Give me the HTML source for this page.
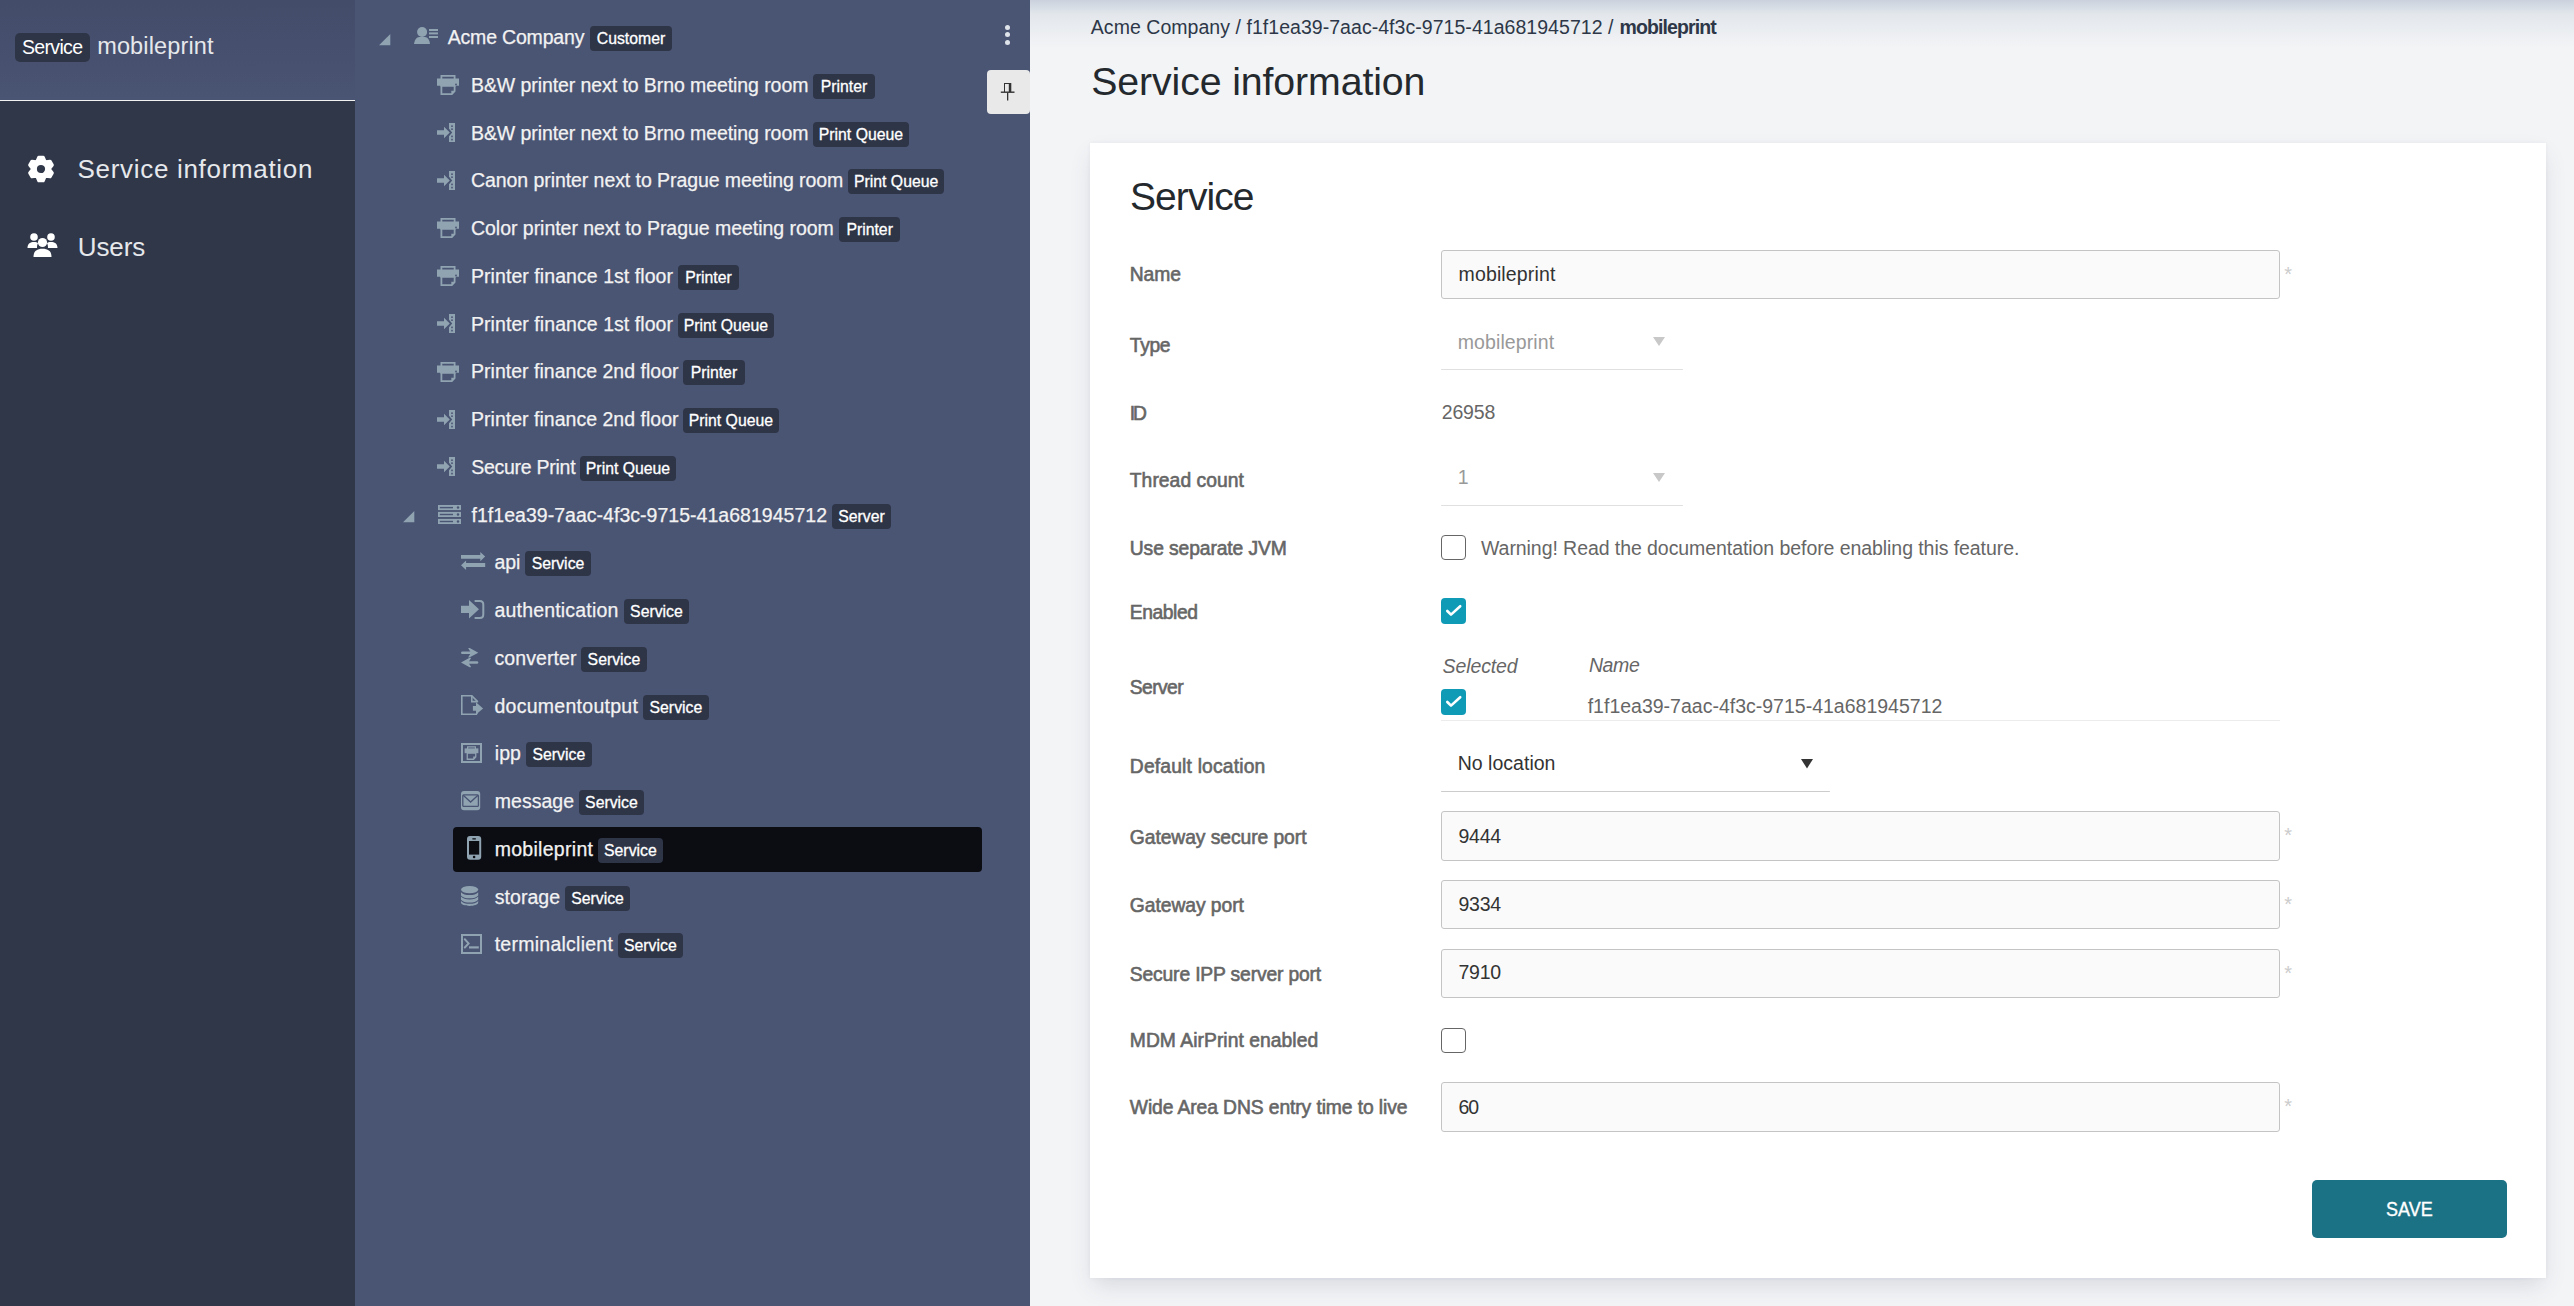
<!DOCTYPE html>
<html><head><meta charset="utf-8"><title>Service information</title>
<style>
html,body{margin:0;padding:0;width:2574px;height:1306px;overflow:hidden;background:#f3f4f6;}
body{position:relative;font-family:"Liberation Sans",sans-serif;}
.t{position:absolute;line-height:1;white-space:pre;}
</style></head><body>
<div style="position:absolute;left:0px;top:0px;width:355px;height:100px;background:linear-gradient(180deg,#434c69 0%,#4a5473 100%);"></div>
<div style="position:absolute;left:0px;top:100px;width:355px;height:1px;background:#f2f2f2;"></div>
<div style="position:absolute;left:0px;top:101px;width:355px;height:1205px;background:#2f3749;"></div>
<div style="position:absolute;left:15px;top:33px;width:75px;height:29px;background:#2e3547;border-radius:5px;"></div>
<div class="t" style="left:22.00px;top:38px;font-size:19.5px;color:#ffffff;letter-spacing:-0.667px;">Service</div>
<div class="t" style="left:97.20px;top:35px;font-size:23.5px;color:#e6e8ec;letter-spacing:0.140px;">mobileprint</div>
<svg style="position:absolute;left:26.6px;top:154.6px" width="28" height="28" viewBox="0 0 28 28"><path fill="#ffffff" stroke="#ffffff" stroke-width="2.8" stroke-linejoin="round" fill-rule="evenodd" d="M9.96 6.07 L11.69 2.12 L16.31 2.12 L18.04 6.07 L18.85 6.54 L23.13 6.06 L25.44 10.06 L22.89 13.53 L22.89 14.47 L25.44 17.94 L23.13 21.94 L18.85 21.46 L18.04 21.93 L16.31 25.88 L11.69 25.88 L9.96 21.93 L9.15 21.46 L4.87 21.94 L2.56 17.94 L5.11 14.47 L5.11 13.53 L2.56 10.06 L4.87 6.06 L9.15 6.54 Z M19.5 14.0 A5.5 5.5 0 1 0 8.5 14.0 A5.5 5.5 0 1 0 19.5 14.0 Z"/></svg>
<svg style="position:absolute;left:27px;top:233px" width="31" height="25" viewBox="0 0 31 25"><g fill="#ffffff"><circle cx="7" cy="4" r="3.8"/><circle cx="24" cy="4" r="3.8"/><path d="M0.5 15 C0.5 10.5 3.5 9 7 9 C9 9 10.3 9.6 11 10.2 C10.2 11.5 10 12.5 10 15 Z"/><path d="M30.5 15 C30.5 10.5 27.5 9 24 9 C22 9 20.7 9.6 20 10.2 C20.8 11.5 21 12.5 21 15 Z"/><circle cx="15.5" cy="9.5" r="4.6"/><path d="M6.5 24 C6.5 18 10 15.8 15.5 15.8 C21 15.8 24.5 18 24.5 24 Z"/></g></svg>
<div class="t" style="left:77.60px;top:156px;font-size:26px;color:#e6e8ec;letter-spacing:0.683px;">Service information</div>
<div class="t" style="left:77.80px;top:234px;font-size:26px;color:#e6e8ec;letter-spacing:-0.100px;">Users</div>
<div style="position:absolute;left:355px;top:0px;width:675px;height:1306px;background:#4a5473;"></div>
<div style="position:absolute;left:453px;top:827px;width:529px;height:45px;background:#0b0d12;border-radius:4px;"></div>
<div class="t" style="left:447.70px;top:28px;font-size:19.5px;color:#f2f2f2;letter-spacing:-0.182px;-webkit-text-stroke:0.25px #f2f2f2;">Acme Company</div>
<div style="position:absolute;left:590px;top:26.000000000000004px;width:82px;height:25px;background:#2e3547;border-radius:4px;"></div>
<div class="t" style="left:590.00px;top:31px;font-size:15.8px;color:#ffffff;-webkit-text-stroke:0.3px #ffffff;width:82.0px;text-align:center;">Customer</div>
<div class="t" style="left:471.00px;top:76px;font-size:19.5px;color:#f2f2f2;letter-spacing:-0.081px;-webkit-text-stroke:0.25px #f2f2f2;">B&amp;W printer next to Brno meeting room</div>
<div style="position:absolute;left:813.1px;top:73.75px;width:61.799999999999955px;height:25px;background:#2e3547;border-radius:4px;"></div>
<div class="t" style="left:813.10px;top:79px;font-size:15.8px;color:#ffffff;-webkit-text-stroke:0.3px #ffffff;width:61.8px;text-align:center;">Printer</div>
<div class="t" style="left:471.00px;top:124px;font-size:19.5px;color:#f2f2f2;letter-spacing:-0.081px;-webkit-text-stroke:0.25px #f2f2f2;">B&amp;W printer next to Brno meeting room</div>
<div style="position:absolute;left:813.1px;top:121.49999999999999px;width:95.69999999999993px;height:25px;background:#2e3547;border-radius:4px;"></div>
<div class="t" style="left:813.10px;top:127px;font-size:15.8px;color:#ffffff;-webkit-text-stroke:0.3px #ffffff;width:95.7px;text-align:center;">Print Queue</div>
<div class="t" style="left:471.00px;top:171px;font-size:19.5px;color:#f2f2f2;letter-spacing:-0.068px;-webkit-text-stroke:0.25px #f2f2f2;">Canon printer next to Prague meeting room</div>
<div style="position:absolute;left:848.3px;top:169.25px;width:95.70000000000005px;height:25px;background:#2e3547;border-radius:4px;"></div>
<div class="t" style="left:848.30px;top:174px;font-size:15.8px;color:#ffffff;-webkit-text-stroke:0.3px #ffffff;width:95.7px;text-align:center;">Print Queue</div>
<div class="t" style="left:471.00px;top:219px;font-size:19.5px;color:#f2f2f2;letter-spacing:-0.033px;-webkit-text-stroke:0.25px #f2f2f2;">Color printer next to Prague meeting room</div>
<div style="position:absolute;left:839.3px;top:217.0px;width:60.700000000000045px;height:25px;background:#2e3547;border-radius:4px;"></div>
<div class="t" style="left:839.30px;top:222px;font-size:15.8px;color:#ffffff;-webkit-text-stroke:0.3px #ffffff;width:60.7px;text-align:center;">Printer</div>
<div class="t" style="left:471.00px;top:267px;font-size:19.5px;color:#f2f2f2;letter-spacing:0.062px;-webkit-text-stroke:0.25px #f2f2f2;">Printer finance 1st floor</div>
<div style="position:absolute;left:678.2px;top:264.75px;width:60.59999999999991px;height:25px;background:#2e3547;border-radius:4px;"></div>
<div class="t" style="left:678.20px;top:270px;font-size:15.8px;color:#ffffff;-webkit-text-stroke:0.3px #ffffff;width:60.6px;text-align:center;">Printer</div>
<div class="t" style="left:471.00px;top:315px;font-size:19.5px;color:#f2f2f2;letter-spacing:0.062px;-webkit-text-stroke:0.25px #f2f2f2;">Printer finance 1st floor</div>
<div style="position:absolute;left:678.2px;top:312.5px;width:95.5px;height:25px;background:#2e3547;border-radius:4px;"></div>
<div class="t" style="left:678.20px;top:318px;font-size:15.8px;color:#ffffff;-webkit-text-stroke:0.3px #ffffff;width:95.5px;text-align:center;">Print Queue</div>
<div class="t" style="left:471.00px;top:362px;font-size:19.5px;color:#f2f2f2;letter-spacing:0.021px;-webkit-text-stroke:0.25px #f2f2f2;">Printer finance 2nd floor</div>
<div style="position:absolute;left:683.1px;top:360.25px;width:61.60000000000002px;height:25px;background:#2e3547;border-radius:4px;"></div>
<div class="t" style="left:683.10px;top:365px;font-size:15.8px;color:#ffffff;-webkit-text-stroke:0.3px #ffffff;width:61.6px;text-align:center;">Printer</div>
<div class="t" style="left:471.00px;top:410px;font-size:19.5px;color:#f2f2f2;letter-spacing:0.021px;-webkit-text-stroke:0.25px #f2f2f2;">Printer finance 2nd floor</div>
<div style="position:absolute;left:683.1px;top:408.0px;width:95.60000000000002px;height:25px;background:#2e3547;border-radius:4px;"></div>
<div class="t" style="left:683.10px;top:413px;font-size:15.8px;color:#ffffff;-webkit-text-stroke:0.3px #ffffff;width:95.6px;text-align:center;">Print Queue</div>
<div class="t" style="left:471.20px;top:458px;font-size:19.5px;color:#f2f2f2;letter-spacing:-0.264px;-webkit-text-stroke:0.25px #f2f2f2;">Secure Print</div>
<div style="position:absolute;left:580.2px;top:455.75px;width:95.59999999999991px;height:25px;background:#2e3547;border-radius:4px;"></div>
<div class="t" style="left:580.20px;top:461px;font-size:15.8px;color:#ffffff;-webkit-text-stroke:0.3px #ffffff;width:95.6px;text-align:center;">Print Queue</div>
<div class="t" style="left:471.50px;top:506px;font-size:19.5px;color:#f2f2f2;letter-spacing:0.029px;-webkit-text-stroke:0.25px #f2f2f2;">f1f1ea39-7aac-4f3c-9715-41a681945712</div>
<div style="position:absolute;left:832.1px;top:503.50000000000006px;width:58.799999999999955px;height:25px;background:#2e3547;border-radius:4px;"></div>
<div class="t" style="left:832.10px;top:509px;font-size:15.8px;color:#ffffff;-webkit-text-stroke:0.3px #ffffff;width:58.8px;text-align:center;">Server</div>
<div class="t" style="left:494.50px;top:553px;font-size:19.5px;color:#f2f2f2;letter-spacing:-0.100px;-webkit-text-stroke:0.25px #f2f2f2;">api</div>
<div style="position:absolute;left:525.3px;top:551.25px;width:65.40000000000009px;height:25px;background:#2e3547;border-radius:4px;"></div>
<div class="t" style="left:525.30px;top:556px;font-size:15.8px;color:#ffffff;-webkit-text-stroke:0.3px #ffffff;width:65.4px;text-align:center;">Service</div>
<div class="t" style="left:494.50px;top:601px;font-size:19.5px;color:#f2f2f2;letter-spacing:0.185px;-webkit-text-stroke:0.25px #f2f2f2;">authentication</div>
<div style="position:absolute;left:624.1px;top:599.0px;width:64.69999999999993px;height:25px;background:#2e3547;border-radius:4px;"></div>
<div class="t" style="left:624.10px;top:604px;font-size:15.8px;color:#ffffff;-webkit-text-stroke:0.3px #ffffff;width:64.7px;text-align:center;">Service</div>
<div class="t" style="left:494.50px;top:649px;font-size:19.5px;color:#f2f2f2;letter-spacing:0.075px;-webkit-text-stroke:0.25px #f2f2f2;">converter</div>
<div style="position:absolute;left:581.3px;top:646.75px;width:65.30000000000007px;height:25px;background:#2e3547;border-radius:4px;"></div>
<div class="t" style="left:581.30px;top:652px;font-size:15.8px;color:#ffffff;-webkit-text-stroke:0.3px #ffffff;width:65.3px;text-align:center;">Service</div>
<div class="t" style="left:494.50px;top:697px;font-size:19.5px;color:#f2f2f2;letter-spacing:0.269px;-webkit-text-stroke:0.25px #f2f2f2;">documentoutput</div>
<div style="position:absolute;left:643.1px;top:694.5px;width:65.60000000000002px;height:25px;background:#2e3547;border-radius:4px;"></div>
<div class="t" style="left:643.10px;top:700px;font-size:15.8px;color:#ffffff;-webkit-text-stroke:0.3px #ffffff;width:65.6px;text-align:center;">Service</div>
<div class="t" style="left:494.80px;top:744px;font-size:19.5px;color:#f2f2f2;letter-spacing:0.050px;-webkit-text-stroke:0.25px #f2f2f2;">ipp</div>
<div style="position:absolute;left:526.2px;top:742.25px;width:65.39999999999998px;height:25px;background:#2e3547;border-radius:4px;"></div>
<div class="t" style="left:526.20px;top:747px;font-size:15.8px;color:#ffffff;-webkit-text-stroke:0.3px #ffffff;width:65.4px;text-align:center;">Service</div>
<div class="t" style="left:494.70px;top:792px;font-size:19.5px;color:#f2f2f2;letter-spacing:0.050px;-webkit-text-stroke:0.25px #f2f2f2;">message</div>
<div style="position:absolute;left:579px;top:790.0px;width:64.89999999999998px;height:25px;background:#2e3547;border-radius:4px;"></div>
<div class="t" style="left:579.00px;top:795px;font-size:15.8px;color:#ffffff;-webkit-text-stroke:0.3px #ffffff;width:64.9px;text-align:center;">Service</div>
<div class="t" style="left:494.70px;top:840px;font-size:19.5px;color:#f2f2f2;letter-spacing:0.290px;-webkit-text-stroke:0.25px #f2f2f2;">mobileprint</div>
<div style="position:absolute;left:598px;top:837.75px;width:64.79999999999995px;height:25px;background:#2e3547;border-radius:4px;"></div>
<div class="t" style="left:598.00px;top:843px;font-size:15.8px;color:#ffffff;-webkit-text-stroke:0.3px #ffffff;width:64.8px;text-align:center;">Service</div>
<div class="t" style="left:494.70px;top:888px;font-size:19.5px;color:#f2f2f2;letter-spacing:0.067px;-webkit-text-stroke:0.25px #f2f2f2;">storage</div>
<div style="position:absolute;left:565.2px;top:885.5px;width:64.69999999999993px;height:25px;background:#2e3547;border-radius:4px;"></div>
<div class="t" style="left:565.20px;top:891px;font-size:15.8px;color:#ffffff;-webkit-text-stroke:0.3px #ffffff;width:64.7px;text-align:center;">Service</div>
<div class="t" style="left:494.70px;top:935px;font-size:19.5px;color:#f2f2f2;letter-spacing:0.254px;-webkit-text-stroke:0.25px #f2f2f2;">terminalclient</div>
<div style="position:absolute;left:618px;top:933.25px;width:64.70000000000005px;height:25px;background:#2e3547;border-radius:4px;"></div>
<div class="t" style="left:618.00px;top:938px;font-size:15.8px;color:#ffffff;-webkit-text-stroke:0.3px #ffffff;width:64.7px;text-align:center;">Service</div>
<svg style="position:absolute;left:378.6px;top:33.7px;overflow:visible" width="12" height="12" viewBox="0 0 12 12"><path fill="#8fa3b1" d="M0 11.3 L11.3 11.3 L11.3 0 Z"/></svg>
<svg style="position:absolute;left:402.6px;top:510.8px;overflow:visible" width="12" height="12" viewBox="0 0 12 12"><path fill="#8fa3b1" d="M0 11.3 L11.3 11.3 L11.3 0 Z"/></svg>
<svg style="position:absolute;left:414px;top:27px;overflow:visible" width="25" height="18" viewBox="0 0 25 18"><g fill="#8fa3b1"><circle cx="8.1" cy="5" r="5"/><path d="M0 17 C0.6 12.5 2.8 10.2 5.2 10 L11 10 C13.4 10.2 15.5 12.5 16 17 Z"/><rect x="15" y="2" width="9" height="2"/><rect x="15" y="5.4" width="9" height="2"/><rect x="15" y="9" width="9" height="2"/></g></svg>
<svg style="position:absolute;left:437px;top:75.0px;overflow:visible" width="22" height="20" viewBox="0 0 22 20"><g fill="#8fa3b1"><path fill-rule="evenodd" d="M3.5 0 H18.5 V4 H16.7 V1.7 H5.3 V4 H3.5 Z"/><path d="M0 3.5 H22 V10.8 H18.8 V11.5 H3.2 V10.8 H0 Z"/><path fill-rule="evenodd" d="M3.5 10 H18.5 V16.5 L15.2 20 H3.5 Z M5.3 11.5 V18.3 H14.3 V15.7 H16.7 V11.5 Z"/></g><circle cx="19" cy="9.5" r="0.9" fill="#4a5473"/></svg>
<svg style="position:absolute;left:437px;top:218.25px;overflow:visible" width="22" height="20" viewBox="0 0 22 20"><g fill="#8fa3b1"><path fill-rule="evenodd" d="M3.5 0 H18.5 V4 H16.7 V1.7 H5.3 V4 H3.5 Z"/><path d="M0 3.5 H22 V10.8 H18.8 V11.5 H3.2 V10.8 H0 Z"/><path fill-rule="evenodd" d="M3.5 10 H18.5 V16.5 L15.2 20 H3.5 Z M5.3 11.5 V18.3 H14.3 V15.7 H16.7 V11.5 Z"/></g><circle cx="19" cy="9.5" r="0.9" fill="#4a5473"/></svg>
<svg style="position:absolute;left:437px;top:266.0px;overflow:visible" width="22" height="20" viewBox="0 0 22 20"><g fill="#8fa3b1"><path fill-rule="evenodd" d="M3.5 0 H18.5 V4 H16.7 V1.7 H5.3 V4 H3.5 Z"/><path d="M0 3.5 H22 V10.8 H18.8 V11.5 H3.2 V10.8 H0 Z"/><path fill-rule="evenodd" d="M3.5 10 H18.5 V16.5 L15.2 20 H3.5 Z M5.3 11.5 V18.3 H14.3 V15.7 H16.7 V11.5 Z"/></g><circle cx="19" cy="9.5" r="0.9" fill="#4a5473"/></svg>
<svg style="position:absolute;left:437px;top:361.5px;overflow:visible" width="22" height="20" viewBox="0 0 22 20"><g fill="#8fa3b1"><path fill-rule="evenodd" d="M3.5 0 H18.5 V4 H16.7 V1.7 H5.3 V4 H3.5 Z"/><path d="M0 3.5 H22 V10.8 H18.8 V11.5 H3.2 V10.8 H0 Z"/><path fill-rule="evenodd" d="M3.5 10 H18.5 V16.5 L15.2 20 H3.5 Z M5.3 11.5 V18.3 H14.3 V15.7 H16.7 V11.5 Z"/></g><circle cx="19" cy="9.5" r="0.9" fill="#4a5473"/></svg>
<svg style="position:absolute;left:437px;top:123.0px;overflow:visible" width="19" height="19" viewBox="0 0 19 19"><g fill="#8fa3b1"><path d="M0 7.3 H7 V3.7 L12.8 9.5 L7 15.3 V11.7 H0 Z"/><path d="M12 0 H18 V19 H12 V13.2 L15.2 9.5 L12 5.8 Z"/></g><g fill="#4a5473"><rect x="14.2" y="2.4" width="1.6" height="1.6"/><rect x="14.2" y="5.4" width="1.6" height="1.6"/><rect x="14.2" y="12.6" width="1.6" height="1.6"/><rect x="14.2" y="15.8" width="1.6" height="1.6"/></g></svg>
<svg style="position:absolute;left:437px;top:170.75px;overflow:visible" width="19" height="19" viewBox="0 0 19 19"><g fill="#8fa3b1"><path d="M0 7.3 H7 V3.7 L12.8 9.5 L7 15.3 V11.7 H0 Z"/><path d="M12 0 H18 V19 H12 V13.2 L15.2 9.5 L12 5.8 Z"/></g><g fill="#4a5473"><rect x="14.2" y="2.4" width="1.6" height="1.6"/><rect x="14.2" y="5.4" width="1.6" height="1.6"/><rect x="14.2" y="12.6" width="1.6" height="1.6"/><rect x="14.2" y="15.8" width="1.6" height="1.6"/></g></svg>
<svg style="position:absolute;left:437px;top:314.0px;overflow:visible" width="19" height="19" viewBox="0 0 19 19"><g fill="#8fa3b1"><path d="M0 7.3 H7 V3.7 L12.8 9.5 L7 15.3 V11.7 H0 Z"/><path d="M12 0 H18 V19 H12 V13.2 L15.2 9.5 L12 5.8 Z"/></g><g fill="#4a5473"><rect x="14.2" y="2.4" width="1.6" height="1.6"/><rect x="14.2" y="5.4" width="1.6" height="1.6"/><rect x="14.2" y="12.6" width="1.6" height="1.6"/><rect x="14.2" y="15.8" width="1.6" height="1.6"/></g></svg>
<svg style="position:absolute;left:437px;top:409.5px;overflow:visible" width="19" height="19" viewBox="0 0 19 19"><g fill="#8fa3b1"><path d="M0 7.3 H7 V3.7 L12.8 9.5 L7 15.3 V11.7 H0 Z"/><path d="M12 0 H18 V19 H12 V13.2 L15.2 9.5 L12 5.8 Z"/></g><g fill="#4a5473"><rect x="14.2" y="2.4" width="1.6" height="1.6"/><rect x="14.2" y="5.4" width="1.6" height="1.6"/><rect x="14.2" y="12.6" width="1.6" height="1.6"/><rect x="14.2" y="15.8" width="1.6" height="1.6"/></g></svg>
<svg style="position:absolute;left:437px;top:457.25px;overflow:visible" width="19" height="19" viewBox="0 0 19 19"><g fill="#8fa3b1"><path d="M0 7.3 H7 V3.7 L12.8 9.5 L7 15.3 V11.7 H0 Z"/><path d="M12 0 H18 V19 H12 V13.2 L15.2 9.5 L12 5.8 Z"/></g><g fill="#4a5473"><rect x="14.2" y="2.4" width="1.6" height="1.6"/><rect x="14.2" y="5.4" width="1.6" height="1.6"/><rect x="14.2" y="12.6" width="1.6" height="1.6"/><rect x="14.2" y="15.8" width="1.6" height="1.6"/></g></svg>
<svg style="position:absolute;left:438px;top:505px;overflow:visible" width="23" height="19" viewBox="0 0 23 19"><rect x="0" y="0" width="23" height="5.1" fill="#8fa3b1"/><rect x="1.8" y="1.9" width="13.2" height="1.4" fill="#4a5473"/><circle cx="20" cy="2.55" r="1.2" fill="#4a5473"/><rect x="0" y="6.9" width="23" height="5.1" fill="#8fa3b1"/><rect x="1.8" y="8.8" width="13.2" height="1.4" fill="#4a5473"/><circle cx="20" cy="9.45" r="1.2" fill="#4a5473"/><rect x="0" y="13.9" width="23" height="5.1" fill="#8fa3b1"/><rect x="1.8" y="15.8" width="13.2" height="1.4" fill="#4a5473"/><circle cx="20" cy="16.45" r="1.2" fill="#4a5473"/></svg>
<svg style="position:absolute;left:461px;top:552px;overflow:visible" width="24" height="19" viewBox="0 0 24 19"><g fill="#8fa3b1"><path d="M0 3.1 H19.3 V0 L24.2 4.6 L19.3 9.2 V6.8 H0 Z"/><path d="M24.2 11 H5.1 V8.6 L0 13.3 L5.1 18.1 V15 H24.2 Z"/></g></svg>
<svg style="position:absolute;left:461px;top:600px;overflow:visible" width="24" height="19" viewBox="0 0 24 19"><g fill="#8fa3b1"><path d="M0 5.8 H8 V0 L18 9.2 L8 18.4 V12.9 H0 Z"/></g><path d="M13.6 1 H18.8 C20.9 1 22.3 2.4 22.3 4.5 V14.5 C22.3 16.6 20.9 18 18.8 18 H13.6" fill="none" stroke="#8fa3b1" stroke-width="2"/></svg>
<svg style="position:absolute;left:461px;top:648px;overflow:visible" width="18" height="19" viewBox="0 0 18 19"><g fill="#8fa3b1"><rect x="0" y="3.4" width="12" height="2.6" rx="1.3"/><path d="M7.2 0.2 C8 -0.2 8.6 0 9.2 0.3 L17.3 4.7 L9.2 9.1 C8.6 9.4 8 9.6 7.2 9.2 L10 4.7 Z"/><rect x="5" y="13.2" width="12.3" height="2.6" rx="1.3"/><path d="M10.1 10 C9.3 9.6 8.7 9.8 8.1 10.1 L0 14.5 L8.1 18.9 C8.7 19.2 9.3 19.4 10.1 19 L7.3 14.5 Z"/></g></svg>
<svg style="position:absolute;left:461px;top:695px;overflow:visible" width="23" height="20" viewBox="0 0 23 20"><path d="M16.4 7.3 V6.4 L10.8 0.8 H0.8 V19.2 H15.4 L16.4 17.4" fill="none" stroke="#8fa3b1" stroke-width="1.6"/><path d="M10.8 0.8 V6.6 H16.4" fill="none" stroke="#8fa3b1" stroke-width="1.6"/><path d="M11.9 11.1 H15 V7.3 L22.1 13.4 L15 19.5 V15.7 H11.9 Z" fill="#8fa3b1"/></svg>
<svg style="position:absolute;left:461px;top:743px;overflow:visible" width="21" height="20" viewBox="0 0 21 20"><rect x="1" y="1" width="19" height="18" fill="none" stroke="#8fa3b1" stroke-width="2"/><g fill="#8fa3b1"><path fill-rule="evenodd" d="M6 3.3 H15 V6 H13.8 V4.4 H7.2 V6 H6 Z"/><path d="M3.6 5.4 H17.4 V10.2 H3.6 Z"/><path fill-rule="evenodd" d="M5.6 9.6 H15.4 V14.3 L12.9 16.9 H5.6 Z M6.9 10.7 V15.6 H12.2 V13.6 H14.1 V10.7 Z"/></g></svg>
<svg style="position:absolute;left:461px;top:791px;overflow:visible" width="19" height="19" viewBox="0 0 19 19"><rect x="0" y="0" width="19.2" height="19.2" rx="3" fill="#8fa3b1"/><rect x="1.8" y="3.8" width="15.6" height="11.6" rx="1" fill="none" stroke="#4a5473" stroke-width="1.3"/><path d="M2.2 4.3 L9.6 11 L17 4.3" fill="none" stroke="#4a5473" stroke-width="1.3"/></svg>
<svg style="position:absolute;left:467px;top:836px;overflow:visible" width="14" height="24" viewBox="0 0 14 24"><rect x="0" y="0" width="14.2" height="23.8" rx="3" fill="#8fa3b1"/><rect x="2" y="5" width="10.2" height="13.6" fill="#0b0d12"/><rect x="5.2" y="2.2" width="3.8" height="1.2" rx="0.6" fill="#0b0d12"/><circle cx="7.1" cy="21" r="1.3" fill="#0b0d12"/></svg>
<svg style="position:absolute;left:461px;top:886px;overflow:visible" width="17" height="20" viewBox="0 0 17 20"><g fill="#8fa3b1"><ellipse cx="8.6" cy="3.6" rx="8.6" ry="3.6"/><path d="M0 6.2 C1.5 8.2 5 9 8.6 9 C12.2 9 15.7 8.2 17.2 6.2 V9.4 C15.7 11.4 12.2 12.2 8.6 12.2 C5 12.2 1.5 11.4 0 9.4 Z"/><path d="M0 10.6 C1.5 12.6 5 13.4 8.6 13.4 C12.2 13.4 15.7 12.6 17.2 10.6 V13.8 C15.7 15.8 12.2 16.6 8.6 16.6 C5 16.6 1.5 15.8 0 13.8 Z"/><path d="M0 15 C1.5 17 5 17.8 8.6 17.8 C12.2 17.8 15.7 17 17.2 15 V16.6 C17.2 18.6 13 20 8.6 20 C4.2 20 0 18.6 0 16.6 Z"/></g></svg>
<svg style="position:absolute;left:461px;top:934px;overflow:visible" width="21" height="20" viewBox="0 0 21 20"><rect x="1" y="1" width="19" height="18" fill="none" stroke="#8fa3b1" stroke-width="2"/><path d="M3.8 5.3 L7.6 9.4 L3.8 13.5" fill="none" stroke="#8fa3b1" stroke-width="2" stroke-linecap="round"/><rect x="8" y="12.3" width="9.8" height="2.2" fill="#8fa3b1"/></svg>
<div style="position:absolute;left:1005.1px;top:24.8px;width:5px;height:5px;background:#dfe3ea;border-radius:50%;"></div>
<div style="position:absolute;left:1005.1px;top:32.1px;width:5px;height:5px;background:#dfe3ea;border-radius:50%;"></div>
<div style="position:absolute;left:1005.1px;top:39.6px;width:5px;height:5px;background:#dfe3ea;border-radius:50%;"></div>
<div style="position:absolute;left:987px;top:70px;width:42.5px;height:44px;background:#e9e9e9;border-radius:4px;"></div>
<svg style="position:absolute;left:1000px;top:82px;overflow:visible" width="16" height="20" viewBox="0 0 16 20"><g fill="#333"><path fill-rule="evenodd" d="M4 1 H11.3 V10 H4 Z M5 2 V10 H8.8 V2 Z"/><rect x="0.8" y="9.5" width="13.7" height="1.4"/><rect x="7" y="10.5" width="1.3" height="8"/></g></svg>
<div style="position:absolute;left:1030px;top:0px;width:1544px;height:1306px;background:#f3f4f6;"></div>
<div style="position:absolute;left:1030px;top:0px;width:1544px;height:48px;background:linear-gradient(180deg,#cad2dd 0%,#e3e7ec 30%,#f3f4f6 100%);"></div>
<div class="t" style="left:1090.80px;top:18px;font-size:19.5px;color:#2d3748;letter-spacing:0.044px;">Acme Company / f1f1ea39-7aac-4f3c-9715-41a681945712 /</div>
<div class="t" style="left:1619.50px;top:18px;font-size:19.5px;color:#2d3748;font-weight:700;letter-spacing:-0.900px;">mobileprint</div>
<div class="t" style="left:1091.20px;top:62px;font-size:39.3px;color:#24292e;letter-spacing:-0.117px;">Service information</div>
<div style="position:absolute;left:1090px;top:143px;width:1456px;height:1135px;background:#ffffff;box-shadow:0 10px 22px -4px rgba(60,70,100,0.17),0 0 4px rgba(60,70,100,0.05);"></div>
<div class="t" style="left:1130.00px;top:177px;font-size:39px;color:#24292e;letter-spacing:-0.917px;">Service</div>
<div class="t" style="left:1129.80px;top:265px;font-size:19.3px;color:#666666;letter-spacing:-0.100px;-webkit-text-stroke:0.6px #666666;">Name</div>
<div class="t" style="left:1129.80px;top:336px;font-size:19.3px;color:#666666;letter-spacing:-0.367px;-webkit-text-stroke:0.6px #666666;">Type</div>
<div class="t" style="left:1129.80px;top:404px;font-size:19.3px;color:#666666;letter-spacing:-2.100px;-webkit-text-stroke:0.6px #666666;">ID</div>
<div class="t" style="left:1129.80px;top:471px;font-size:19.3px;color:#666666;letter-spacing:0.045px;-webkit-text-stroke:0.6px #666666;">Thread count</div>
<div class="t" style="left:1129.80px;top:539px;font-size:19.3px;color:#666666;letter-spacing:-0.107px;-webkit-text-stroke:0.6px #666666;">Use separate JVM</div>
<div class="t" style="left:1129.80px;top:603px;font-size:19.3px;color:#666666;letter-spacing:-0.433px;-webkit-text-stroke:0.6px #666666;">Enabled</div>
<div class="t" style="left:1129.80px;top:678px;font-size:19.3px;color:#666666;letter-spacing:-0.580px;-webkit-text-stroke:0.6px #666666;">Server</div>
<div class="t" style="left:1129.80px;top:757px;font-size:19.3px;color:#666666;letter-spacing:0.173px;-webkit-text-stroke:0.6px #666666;">Default location</div>
<div class="t" style="left:1129.80px;top:828px;font-size:19.3px;color:#666666;letter-spacing:-0.067px;-webkit-text-stroke:0.6px #666666;">Gateway secure port</div>
<div class="t" style="left:1129.80px;top:896px;font-size:19.3px;color:#666666;letter-spacing:-0.055px;-webkit-text-stroke:0.6px #666666;">Gateway port</div>
<div class="t" style="left:1129.80px;top:965px;font-size:19.3px;color:#666666;letter-spacing:-0.157px;-webkit-text-stroke:0.6px #666666;">Secure IPP server port</div>
<div class="t" style="left:1129.80px;top:1031px;font-size:19.3px;color:#666666;letter-spacing:0.042px;-webkit-text-stroke:0.6px #666666;">MDM AirPrint enabled</div>
<div class="t" style="left:1129.80px;top:1098px;font-size:19.3px;color:#666666;letter-spacing:-0.100px;-webkit-text-stroke:0.6px #666666;">Wide Area DNS entry time to live</div>
<div style="position:absolute;left:1441px;top:250px;width:839px;height:49px;box-sizing:border-box;background:#fafafa;border:1px solid #c4c4c4;border-radius:3px;"></div>
<div class="t" style="left:1458.50px;top:265px;font-size:19.5px;color:#333333;letter-spacing:0.150px;">mobileprint</div>
<div class="t" style="left:2284.30px;top:264px;font-size:20px;color:#cccccc;">*</div>
<div style="position:absolute;left:1441px;top:811px;width:839px;height:50px;box-sizing:border-box;background:#fafafa;border:1px solid #c4c4c4;border-radius:3px;"></div>
<div class="t" style="left:1458.50px;top:827px;font-size:19.5px;color:#333333;letter-spacing:-0.233px;">9444</div>
<div class="t" style="left:2284.30px;top:825px;font-size:20px;color:#cccccc;">*</div>
<div style="position:absolute;left:1441px;top:880px;width:839px;height:49px;box-sizing:border-box;background:#fafafa;border:1px solid #c4c4c4;border-radius:3px;"></div>
<div class="t" style="left:1458.50px;top:895px;font-size:19.5px;color:#333333;letter-spacing:-0.233px;">9334</div>
<div class="t" style="left:2284.30px;top:894px;font-size:20px;color:#cccccc;">*</div>
<div style="position:absolute;left:1441px;top:949px;width:839px;height:49px;box-sizing:border-box;background:#fafafa;border:1px solid #c4c4c4;border-radius:3px;"></div>
<div class="t" style="left:1458.50px;top:963px;font-size:19.5px;color:#333333;letter-spacing:-0.233px;">7910</div>
<div class="t" style="left:2284.30px;top:963px;font-size:20px;color:#cccccc;">*</div>
<div style="position:absolute;left:1441px;top:1082px;width:839px;height:50px;box-sizing:border-box;background:#fafafa;border:1px solid #c4c4c4;border-radius:3px;"></div>
<div class="t" style="left:1458.50px;top:1098px;font-size:19.5px;color:#333333;letter-spacing:-1.100px;">60</div>
<div class="t" style="left:2284.30px;top:1096px;font-size:20px;color:#cccccc;">*</div>
<div class="t" style="left:1457.70px;top:333px;font-size:19.5px;color:#999999;letter-spacing:0.110px;">mobileprint</div>
<svg style="position:absolute;left:1653px;top:337px;overflow:visible" width="13" height="9" viewBox="0 0 13 9"><path d="M0 0 H12 L6 9 Z" fill="#c8c8c8"/></svg>
<div style="position:absolute;left:1441px;top:368.5px;width:242px;height:1.5px;background:#e0e0e0;border-radius:1px;"></div>
<div class="t" style="left:1441.70px;top:403px;font-size:19.5px;color:#666666;letter-spacing:-0.150px;">26958</div>
<div class="t" style="left:1457.70px;top:468px;font-size:19.5px;color:#999999;letter-spacing:-3.900px;">1</div>
<svg style="position:absolute;left:1653px;top:473px;overflow:visible" width="13" height="9" viewBox="0 0 13 9"><path d="M0 0 H12 L6 9 Z" fill="#c8c8c8"/></svg>
<div style="position:absolute;left:1441px;top:504.5px;width:242px;height:1.5px;background:#e0e0e0;border-radius:1px;"></div>
<div style="position:absolute;left:1441px;top:535px;width:25px;height:25px;box-sizing:border-box;border:1.5px solid #666;border-radius:4px;background:#fff;"></div>
<div class="t" style="left:1481.00px;top:539px;font-size:19.5px;color:#666666;letter-spacing:-0.067px;">Warning! Read the documentation before enabling this feature.</div>
<div style="position:absolute;left:1441px;top:598.3px;width:25px;height:25.5px;background:#0f9ab6;border-radius:4px;"></div>
<svg style="position:absolute;left:1441px;top:598.3px;overflow:visible" width="25" height="25" viewBox="0 0 25 25"><path d="M6.3 13 L10 16.6 L19.2 8.2" fill="none" stroke="#fff" stroke-width="2.6" stroke-linecap="round" stroke-linejoin="round"/></svg>
<div class="t" style="left:1442.50px;top:657px;font-size:19.5px;color:#666666;font-style:italic;letter-spacing:-0.100px;">Selected</div>
<div class="t" style="left:1588.90px;top:656px;font-size:19.5px;color:#666666;font-style:italic;letter-spacing:-0.367px;">Name</div>
<div style="position:absolute;left:1441px;top:689.3px;width:25px;height:25.5px;background:#0f9ab6;border-radius:4px;"></div>
<svg style="position:absolute;left:1441px;top:689.3px;overflow:visible" width="25" height="25" viewBox="0 0 25 25"><path d="M6.3 13 L10 16.6 L19.2 8.2" fill="none" stroke="#fff" stroke-width="2.6" stroke-linecap="round" stroke-linejoin="round"/></svg>
<div class="t" style="left:1587.70px;top:697px;font-size:19.5px;color:#666666;letter-spacing:0.003px;">f1f1ea39-7aac-4f3c-9715-41a681945712</div>
<div style="position:absolute;left:1441px;top:720px;width:839px;height:1px;background:#ececec;"></div>
<div class="t" style="left:1457.70px;top:754px;font-size:19.5px;color:#333333;letter-spacing:0.020px;">No location</div>
<svg style="position:absolute;left:1801px;top:758.5px;overflow:visible" width="12" height="9.5" viewBox="0 0 12 9.5"><path d="M0 0 H12 L6 9.5 Z" fill="#333"/></svg>
<div style="position:absolute;left:1441px;top:790.5px;width:389px;height:1.5px;background:#cccccc;border-radius:1px;"></div>
<div style="position:absolute;left:1441px;top:1028px;width:25px;height:25px;box-sizing:border-box;border:1.5px solid #666;border-radius:4px;background:#fff;"></div>
<div style="position:absolute;left:2312px;top:1180px;width:195px;height:58px;background:#1c7285;border-radius:5px;"></div>
<div class="t" style="left:2386.00px;top:1200px;font-size:19.3px;color:#ffffff;-webkit-text-stroke:0.35px #ffffff;transform:scaleX(0.9321);transform-origin:0 0;">SAVE</div>
</body></html>
